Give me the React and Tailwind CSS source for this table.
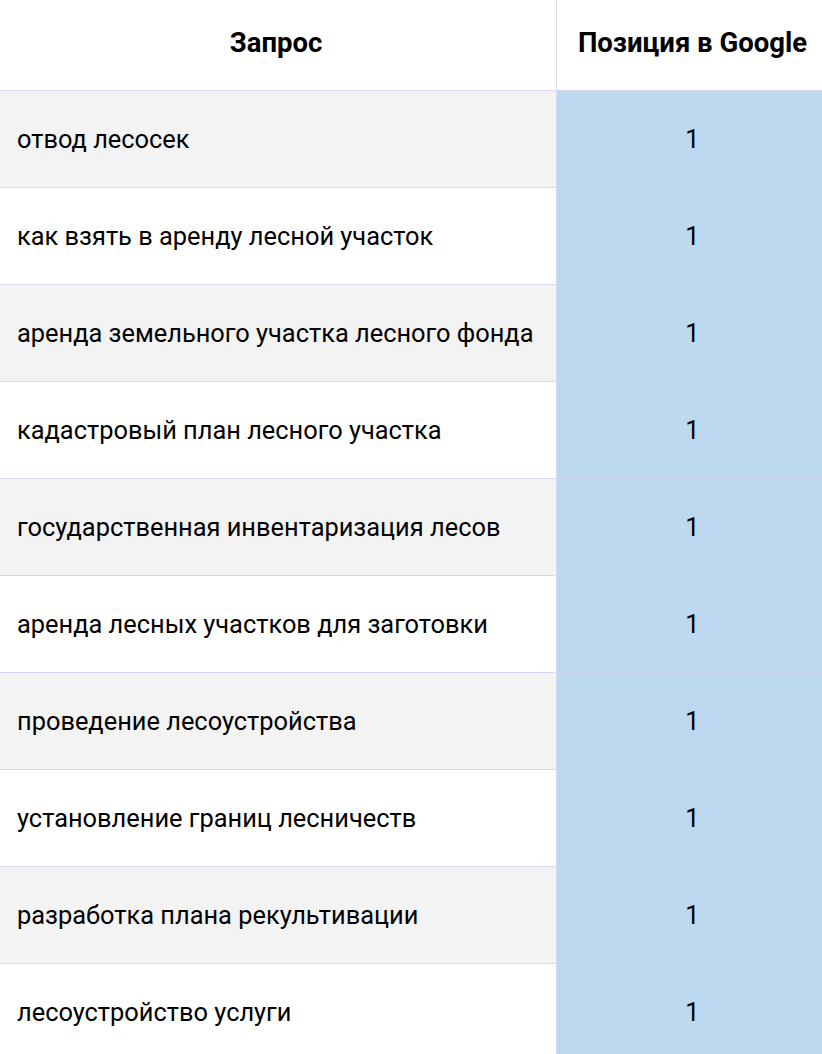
import React from 'react';

const rows = [
  'отвод лесосек',
  'как взять в аренду лесной участок',
  'аренда земельного участка лесного фонда',
  'кадастровый план лесного участка',
  'государственная инвентаризация лесов',
  'аренда лесных участков для заготовки',
  'проведение лесоустройства',
  'установление границ лесничеств',
  'разработка плана рекультивации',
  'лесоустройство услуги',
];

const App = () => {
  return (
    <div className="w-[822px] bg-white text-black font-['Roboto',sans-serif]">
      <div className="grid grid-cols-[557px_1fr]">
        {/* Header */}
        <div className="h-[91px] flex items-center justify-center border-r border-b border-[#d8d8f2] text-[27.5px] font-bold pb-[5px] pr-[4px]">
          Запрос
        </div>
        <div className="h-[91px] flex items-center justify-center border-b border-[#d8d8f2] text-[27.5px] font-bold pb-[5px] pl-[6px]">
          Позиция в Google
        </div>

        {rows.map((q, i) => (
          <React.Fragment key={i}>
            <div
              className={`h-[97px] flex items-center pl-[17px] border-r border-b border-[#d8d8f2] text-[25.4px] ${
                i % 2 === 0 ? 'bg-[#f3f3f4]' : 'bg-white'
              }`}
            >
              {q}
            </div>
            <div className="h-[97px] flex items-center justify-center pl-[6px] bg-[#bdd9ef] border-b border-[#cdd6f3] text-[25.4px]">
              1
            </div>
          </React.Fragment>
        ))}
      </div>
    </div>
  );
};

export default App;
